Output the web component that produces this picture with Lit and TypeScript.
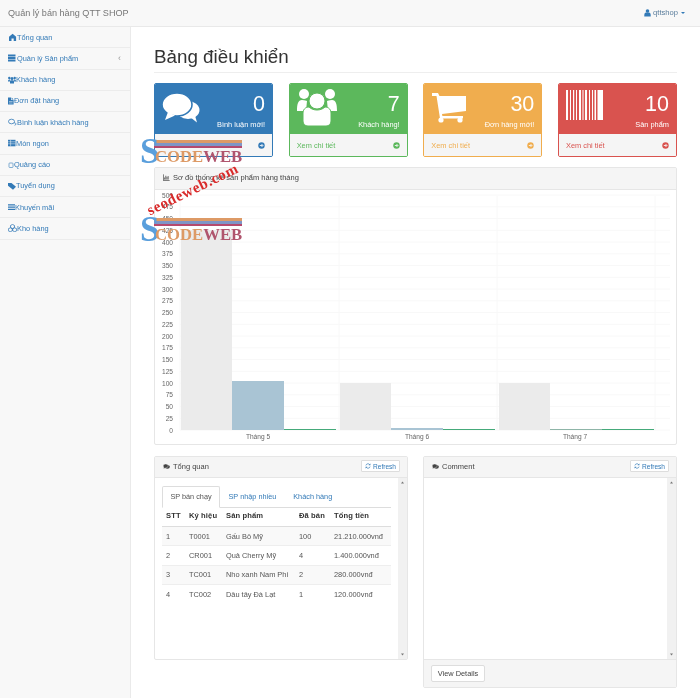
import { LitElement, html, css, svg } from "lit";
import { customElement } from "lit/decorators.js";

const circleArrow = svg`<svg class="arrow" viewBox="0 0 10 10"><circle cx="5" cy="5" r="4.6" fill="currentColor"/><path d="M2.6 5h4M5 2.9 7.1 5 5 7.1" fill="none" stroke="#f5f5f5" stroke-width="1.3"/></svg>`;
const commentsSmall = svg`<svg class="ic" viewBox="0 0 12 10"><ellipse cx="7.5" cy="5.6" rx="4.3" ry="3.2" fill="currentColor"/><ellipse cx="4.6" cy="4" rx="4.3" ry="3.2" fill="currentColor" stroke="#f5f5f5" stroke-width=".6"/><path d="M2 6 1 8.6 5 7z" fill="currentColor"/></svg>`;
const refresh = svg`<svg class="ic" viewBox="0 0 10 10"><path d="M1.5 4a3.6 3.6 0 0 1 6.3-1.3M8.5 6a3.6 3.6 0 0 1-6.3 1.3" fill="none" stroke="currentColor" stroke-width="1.2"/><path d="M9 .8v3H6zM1 9.2v-3h3z" fill="currentColor"/></svg>`;

const navIcons: Record<string, unknown> = {
  dashboard: svg`<svg viewBox="0 0 9 8"><path d="M4.600 .8 1 3.800V8h2.500V5.500h2.200V8h2.400V3.800z" fill="currentColor"/></svg>`,
  list: svg`<svg viewBox="0 0 9 8"><path d="M0 .5h7.500v1.900H0zM0 3h7.500v1.900H0zM0 5.500h7.500v1.900H0z" fill="currentColor"/></svg>`,
  users: svg`<svg viewBox="0 0 8 8"><circle cx="4" cy="2.500" r="1.500" fill="currentColor"/><circle cx="1.300" cy="2" r="1.200" fill="currentColor"/><circle cx="6.700" cy="2" r="1.200" fill="currentColor"/><path d="M2 7.500V5.500C2 4.700 2.600 4.200 3.300 4.200h1.400C5.400 4.200 6 4.700 6 5.500v2zM0 5.400C0 4 .5 3.400 1.900 3.400v2zM8 5.400C8 4 7.500 3.400 6.100 3.400v2z" fill="currentColor"/></svg>`,
  file: svg`<svg viewBox="0 0 6 8"><path d="M0 .5h3v2.500h2.600v4.500H0z" fill="currentColor"/><path d="M3.600 .5 5.600 2.400H3.600z" fill="currentColor"/><path d="M1 4.500h3.600M1 6h3.600" stroke="#f8f8f8" stroke-width=".5"/></svg>`,
  comment: svg`<svg viewBox="0 0 9 8"><ellipse cx="3.500" cy="3.500" rx="3" ry="2.300" fill="none" stroke="currentColor" stroke-width=".8"/><path d="M6 4.700c1.300.2 2 .7 2 1.300s-.5 1-1.400 1.300" fill="none" stroke="currentColor" stroke-width=".8"/></svg>`,
  table: svg`<svg viewBox="0 0 8 8"><path d="M0 .8h7.500v6.500H0z" fill="currentColor"/><path d="M0 2.800h7.500M0 4.800h7.500M2.600 .8v6.500" stroke="#f8f8f8" stroke-width=".5"/></svg>`,
  square: svg`<svg viewBox="0 0 6 8"><rect x="1" y="2" width="4" height="4.500" rx=".7" fill="none" stroke="currentColor" stroke-width=".6"/></svg>`,
  tags: svg`<svg viewBox="0 0 8 8"><path d="M0 1h3.500L8 4.800 5 7.800 0 3.800z" fill="currentColor"/></svg>`,
  bars: svg`<svg viewBox="0 0 7 8"><path d="M0 1.200h7v1.200H0zM0 3.500h7v1.200H0zM0 5.800h7V7H0z" fill="currentColor"/></svg>`,
  cubes: svg`<svg viewBox="0 0 9 8"><path d="M4.500 .4 6.500 1.500v2L4.500 4.500 2.500 3.500v-2zM2.300 3.800l2 1v2l-2 .9-2-.9v-2zM6.700 3.800l2 1v2l-2 .9-2-.9v-2z" fill="none" stroke="currentColor" stroke-width=".8"/></svg>`,
};

const navItems: [string, string, number, boolean?][] = [
  ["dashboard", "Tổng quan", 9],
  ["list", "Quản lý Sản phẩm", 9, true],
  ["users", "Khách hàng", 8],
  ["file", "Đơn đặt hàng", 6],
  ["comment", "Bình luận khách hàng", 9],
  ["table", "Món ngon", 8],
  ["square", "Quảng cáo", 6],
  ["tags", "Tuyển dụng", 8],
  ["bars", "Khuyến mãi", 7],
  ["cubes", "Kho hàng", 9],
];

const barcodeBars: [number, number][] = [[0,2],[4,1],[7,1.2],[10,1],[13,2],[16.5,1],[19,2],[23,1],[26,1],[28.5,1.5],[31.5,5.5]];
const icons = {
  comments: svg`<svg class="big" style="width:38px;height:30px;left:7px;top:9px" viewBox="0 0 38 30"><ellipse cx="26" cy="17" rx="11.5" ry="9" fill="#fff"/><path d="M28 24l7 5.5-2-7z" fill="#fff"/><ellipse cx="15" cy="11.5" rx="15" ry="11.5" fill="#fff" stroke="#337ab7" stroke-width="1.6"/><path d="M6 19 3 27l10-4.5z" fill="#fff"/></svg>`,
  users: svg`<svg class="big" style="width:40px;height:38px;left:7px;top:4px" viewBox="0 0 40 38"><circle cx="7" cy="6" r="5" fill="#fff"/><circle cx="33" cy="6" r="5" fill="#fff"/><path d="M0 23c0-7 1-11 5-11 3 0 4 1 5 1l-1 10zM40 23c0-7-1-11-5-11-3 0-4 1-5 1l1 10z" fill="#fff"/><circle cx="20" cy="13" r="8" fill="#fff" stroke="#5cb85c" stroke-width="1"/><path d="M6 33V25c0-3 2-6 6-6 2 2 5 3 8 3s6-1 8-3c4 0 6 3 6 6v8c0 3-2 5-5 5H11c-3 0-5-2-5-5z" fill="#fff" stroke="#5cb85c" stroke-width="1"/></svg>`,
  cart: svg`<svg class="big" style="width:36px;height:30px;left:8px;top:9px" viewBox="0 0 36 30"><path d="M0 0h6l1.500 3H34v15L10 21l.4 2H31v2.500H8L4.500 3H0z" fill="#fff"/><circle cx="9" cy="27" r="2.600" fill="#fff"/><circle cx="28" cy="27" r="2.600" fill="#fff"/></svg>`,
  barcode: svg`<svg class="big" style="width:37px;height:30px;left:7px;top:6px" viewBox="0 0 37 30">${barcodeBars.map(([x, w]) => svg`<rect x="${x}" y="0" width="${w}" height="30" fill="#fff"/>`)}</svg>`,
};

const cards = [
  { c: "blue", n: "0", l: "Bình luận mới!", i: icons.comments },
  { c: "green", n: "7", l: "Khách hàng!", i: icons.users },
  { c: "orange", n: "30", l: "Đơn hàng mới!", i: icons.cart },
  { c: "red", n: "10", l: "Sản phẩm", i: icons.barcode },
];

const rows = [
  ["1", "T0001", "Gấu Bô Mỹ", "100", "21.210.000vnđ"],
  ["2", "CR001", "Quả Cherry Mỹ", "4", "1.400.000vnđ"],
  ["3", "TC001", "Nho xanh Nam Phi", "2", "280.000vnđ"],
  ["4", "TC002", "Dâu tây Đà Lạt", "1", "120.000vnđ"],
];

const ticks = Array.from({ length: 21 }, (_, i) => i * 25);
const y0 = 240;
const yOf = (v: number) => y0 - v * 0.47;
const bars = [
  [26, 51, 425, "#ebebeb"], [77, 52, 105, "#a9c4d4"], [129, 52, 1, "#45aa7a"],
  [185, 51, 100, "#ebebeb"], [236, 52, 4, "#a9c4d4"], [288, 52, 1, "#45aa7a"],
  [344, 51, 100, "#ebebeb"], [395, 52, 1, "#8fb5a8"], [447, 52, 1, "#45aa7a"],
] as [number, number, number, string][];

const chart = svg`<svg class="chart" viewBox="0 0 521 255">
  ${ticks.map((t) => svg`<line x1="25" x2="515" y1="${yOf(t)}" y2="${yOf(t)}" stroke="#f8f8f8" stroke-width="1"/>
    <text x="18" y="${yOf(t) + 2.5}" text-anchor="end" class="t">${t}</text>`)}
  ${[25, 184, 342, 500].map((x) => svg`<line x1="${x}" x2="${x}" y1="6" y2="${y0}" stroke="#f8f8f8"/>`)}
  ${bars.map(([x, w, v, c]) => {
    const h = Math.max(1, Math.round(v * 0.47));
    return svg`<rect x="${x}" y="${y0 - h}" width="${w}" height="${h}" fill="${c}"/>`;
  })}
  <text x="103" y="249" text-anchor="middle" class="t">Tháng 5</text>
  <text x="262" y="249" text-anchor="middle" class="t">Tháng 6</text>
  <text x="420" y="249" text-anchor="middle" class="t">Tháng 7</text>
</svg>`;

const scrollbar = html`<div class="sb">
  <svg viewBox="0 0 9 9"><path d="M3 5.500h3L4.500 3.500z" fill="#777"/></svg>
  <svg viewBox="0 0 9 9"><path d="M3 3.500h3L4.500 5.500z" fill="#777"/></svg>
</div>`;

@customElement("app-root")
export class AppRoot extends LitElement {
  static styles = css`
    :host { display: block; position: relative; height: 698px; overflow: hidden; background: #fff; color: #333;
      font-family: "Liberation Sans", Arial, sans-serif; font-size: 7.4px; filter: blur(.35px); }
    * { box-sizing: border-box; }
    .nav { height: 27px; background: #f8f8f8; border-bottom: 1px solid #e9e9e9; display: flex; align-items: center;
      justify-content: space-between; padding: 0 15px 1px 8px; }
    .brand { font-size: 9.100px; color: #777; }
    .user { display: flex; align-items: center; gap: 2px; color: #5a7d9c; font-size: 7.600px; }
    .user svg { width: 7px; height: 8px; color: #337ab7; }
    .caret { width: 0; height: 0; border: 2px solid transparent; border-top-color: #337ab7; border-bottom: 0; margin-left: 1px; }
    .body { display: flex; height: 671px; }
    .side { width: 131px; background: #f8f8f8; border-right: 1px solid #eaeaea; flex: none; }
    .item { height: 21.25px; display: flex; align-items: center; padding: 0 8px; color: #337ab7; border-bottom: 1px solid #ececec; font-size: 7.400px; }
    .item svg { height: 8px; flex: none; }
    .item .ico { flex: none; display: flex; }
    .item .ch { margin-left: auto; color: #999; font-size: 9px; padding-right: 1px; }
    .main { flex: 1; padding: 20px 23px 0 23px; min-width: 0; }
    h1 { margin: 0; font-size: 18.800px; font-weight: 400; line-height: 20px; color: #333; padding-bottom: 5px; border-bottom: 1px solid #eee; }
    .cards { display: grid; grid-template-columns: repeat(4, 1fr); gap: 15.67px; margin-top: 10px; }
    .card { border: 1px solid; border-radius: 2px; overflow: hidden; height: 74px; }
    .card.blue { border-color: #337ab7; color: #337ab7; } .card.green { border-color: #5cb85c; color: #5cb85c; }
    .card.orange { border-color: #f0ad4e; color: #f0ad4e; } .card.red { border-color: #d9534f; color: #d9534f; }
    .top { position: relative; height: 50px; color: #fff; text-align: right; padding: 5px 7px 0 0; }
    .blue .top { background: #337ab7; } .green .top { background: #5cb85c; } .orange .top { background: #f0ad4e; } .red .top { background: #d9534f; }
    .big { position: absolute; }
    .num { font-size: 21.500px; line-height: 30px; }
    .lbl { font-size: 7.400px; line-height: 9px; margin-top: 1px; }
    .foot { height: 23px; background: #f5f5f5; display: flex; align-items: center; justify-content: space-between; padding: 0 7px; font-size: 7.400px; }
    .arrow { width: 7px; height: 7px; }
    .panel { border: 1px solid #e6e6e6; border-radius: 2px; background: #fff; }
    .ph { height: 20.500px; background: #f5f5f5; border-bottom: 1px solid #e6e6e6; display: flex; align-items: center; padding: 0 8px 1px; gap: 3px; font-size: 7.500px; color: #444; }
    .ic { width: 7px; height: 7px; flex: none; }
    .chartp { margin-top: 10px; height: 278px; }
    .chartp .ph { height: 22px; padding-bottom: 2px; }
    .chart { display: block; width: 521px; height: 255px; }
    .t { font-size: 6.600px; fill: #666; font-family: "Liberation Sans", Arial, sans-serif; }
    .low { display: grid; grid-template-columns: 254px 254px; gap: 15px; margin-top: 11px; align-items: start; }
    .ref { margin-left: auto; height: 12px; width: 39px; margin-right: -1px; background: #fff; border: 1px solid #ddd; border-radius: 1px; display: flex; align-items: center; justify-content: center; gap: 2px; font-size: 6.600px; color: #337ab7; }
    .ref svg { width: 6px; height: 6px; }
    .pb { display: flex; }
    .l-panel { height: 204px; } .l-panel .pb { height: 181.500px; }
    .r-panel { height: 232px; } .r-panel .pb { height: 181.500px; }
    .sb { width: 9px; background: #f1f1f1; display: flex; flex-direction: column; justify-content: space-between; flex: none; }
    .sb svg { width: 9px; height: 9px; display: block; }
    .cont { flex: 1; padding: 8px 7px 0 7px; min-width: 0; }
    .tabs { display: flex; height: 22px; border-bottom: 1px solid #ddd; font-size: 7.300px; color: #337ab7; }
    .tab { padding: 0 8.500px; height: 22px; display: flex; align-items: center; }
    .tab.on { width: 58px; border: 1px solid #ddd; border-bottom-color: #fff; border-radius: 2px 2px 0 0; color: #555; justify-content: center; padding: 0; background: #fff; }
    table { border-collapse: collapse; width: 229px; table-layout: fixed; margin-top: 1px; font-size: 7.400px; color: #555; }
    th { text-align: left; font-weight: 700; height: 18px; color: #333; border-bottom: 1.500px solid #ddd; padding: 0 0 3px 4px; font-size: 7.600px; letter-spacing: .1px; }
    td { height: 19.400px; padding: 0 0 0 4px; border-top: 1px solid #eee; white-space: nowrap; }
    tr.odd td { background: #f9f9f9; }
    .pf { height: 28px; background: #f5f5f5; border-top: 1px solid #e6e6e6; padding: 5px 7px; }
    .btn { width: 54px; height: 17px; background: #fff; border: 1px solid #ddd; border-radius: 2px; font-size: 7.400px; color: #444; display: flex; align-items: center; justify-content: center; }
    .wm { position: absolute; left: 140px; width: 104px; height: 26px; font-family: "Liberation Serif", serif; font-weight: 700; pointer-events: none; }
    .wm.a { top: 140px; } .wm.b { top: 218px; }
    .st { position: absolute; left: 14px; width: 88px; height: 8px; background: linear-gradient(#dd9a66 0 3px, #7f95c6 3px 6px, #b5496e 6px 8px); }
    .s { position: absolute; left: 0; top: -6px; font-size: 35px; line-height: 36px; color: #5a9fdc; }
    .cw { position: absolute; left: 15px; top: 8px; font-size: 16.700px; line-height: 18px; color: #dd9a66; white-space: nowrap; }
    .cw b { color: #b0556e; }
    .seo { position: absolute; left: 143px; top: 182px; font-family: "Liberation Serif", serif; font-weight: 700; font-size: 15px; line-height: 15px; letter-spacing: .7px;
      color: #d92b2b; transform: rotate(-26deg); white-space: nowrap; }
  `;

  render() {
    return html`
      <div class="nav">
        <div class="brand">Quản lý bán hàng QTT SHOP</div>
        <div class="user">
          <svg viewBox="0 0 7 8"><circle cx="3.500" cy="2" r="1.800" fill="currentColor"/><path d="M.3 7.600V6C.3 4.600 1 3.800 2 3.600h3c1 .2 1.700 1 1.700 2.400v1.600z" fill="currentColor"/></svg>
          <span>qttshop</span><span class="caret"></span>
        </div>
      </div>
      <div class="body">
        <div class="side">
          ${navItems.map(([i, t, w, ch]) => html`<div class="item"><span class="ico" style="width:${w}px">${navIcons[i]}</span><span>${t}</span>${ch ? html`<span class="ch">‹</span>` : ""}</div>`)}
        </div>
        <div class="main">
          <h1>Bảng điều khiển</h1>
          <div class="cards">
            ${cards.map((c) => html`<div class="card ${c.c}">
              <div class="top">${c.i}<div class="num">${c.n}</div><div class="lbl">${c.l}</div></div>
              <div class="foot"><span>Xem chi tiết</span>${circleArrow}</div>
            </div>`)}
          </div>
          <div class="panel chartp">
            <div class="ph">
              <svg class="ic" viewBox="0 0 10 10"><path d="M.5 .5v9h9M2.300 8V5M4 8V2.500M5.700 8V4M7.400 8V3" fill="none" stroke="currentColor" stroke-width="1.100"/></svg>
              <span>Sơ đồ thống kê sản phẩm hàng tháng</span>
            </div>
            ${chart}
          </div>
          <div class="low">
            <div class="panel l-panel">
              <div class="ph">${commentsSmall}<span>Tổng quan</span><div class="ref">${refresh}<span>Refresh</span></div></div>
              <div class="pb">
                <div class="cont">
                  <div class="tabs"><div class="tab on">SP bán chạy</div><div class="tab">SP nhập nhiều</div><div class="tab">Khách hàng</div></div>
                  <table>
                    <colgroup><col style="width:23px"/><col style="width:37px"/><col style="width:73px"/><col style="width:35px"/><col/></colgroup>
                    <thead><tr><th>STT</th><th>Ký hiệu</th><th>Sản phẩm</th><th>Đã bán</th><th>Tổng tiền</th></tr></thead>
                    <tbody>${rows.map((r, i) => html`<tr class="${i % 2 === 0 ? "odd" : ""}">${r.map((c) => html`<td>${c}</td>`)}</tr>`)}</tbody>
                  </table>
                </div>
                ${scrollbar}
              </div>
            </div>
            <div class="panel r-panel">
              <div class="ph">${commentsSmall}<span>Comment</span><div class="ref">${refresh}<span>Refresh</span></div></div>
              <div class="pb"><div class="cont"></div>${scrollbar}</div>
              <div class="pf"><div class="btn">View Details</div></div>
            </div>
          </div>
        </div>
      </div>
      <div class="wm a"><div class="st"></div><div class="s">S</div><div class="cw">CODE<b>WEB</b></div></div>
      <div class="seo">seodeweb.com</div>
      <div class="wm b"><div class="st"></div><div class="s">S</div><div class="cw">CODE<b>WEB</b></div></div>
    `;
  }
}
